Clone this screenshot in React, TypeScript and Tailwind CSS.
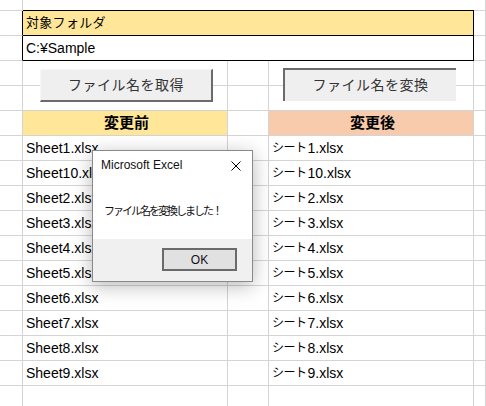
const GRID = "border-r border-b border-[#d4d4d4]";

function Cell({ className = "", children }: { className?: string; children?: React.ReactNode }) {
  return (
    <div className={`h-[25px] flex items-center pl-[3px] overflow-hidden whitespace-nowrap ${className}`}>
      {children}
    </div>
  );
}

const files = ["1", "10", "2", "3", "4", "5", "6", "7", "8", "9"];

export default function App() {
  return (
    <div className="relative w-[486px] h-[406px] overflow-hidden bg-white text-[14px] text-black font-['Liberation_Sans','Noto_Sans_CJK_JP',sans-serif]">
      <div className="grid grid-cols-[23px_205px_41px_205px_1fr]">
        {/* row 1 (cut off) */}
        <div className={`h-[11px] ${GRID}`} />
        <div className="h-[11px] col-span-3 border-b border-black" />
        <div className={`h-[11px] ${GRID}`} />

        {/* folder label */}
        <Cell className="border-r border-b border-r-black border-b-[#d4d4d4]" />
        <Cell className="col-span-3 bg-[#ffe699] border-r border-b border-black">
          <span className="text-[13px] tracking-[0.3px]">対象フォルダ</span>
        </Cell>
        <Cell className={GRID} />

        {/* folder path */}
        <Cell className="border-r border-b border-r-black border-b-[#d4d4d4]" />
        <Cell className="col-span-3 border-r border-b border-black">C:¥Sample</Cell>
        <Cell className={GRID} />

        {/* button rows */}
        {[0, 1].map((r) => (
          <div key={r} className="contents">
            <Cell className={GRID} />
            <Cell className={GRID} />
            <Cell className={GRID} />
            <Cell className={GRID} />
            <Cell className={GRID} />
          </div>
        ))}

        {/* headers */}
        <Cell className={GRID} />
        <Cell className={`${GRID} bg-[#ffe699] justify-center pl-0 font-bold text-[15px]`}>変更前</Cell>
        <Cell className={GRID} />
        <Cell className={`${GRID} bg-[#f8cbad] justify-center pl-0 font-bold text-[15px]`}>変更後</Cell>
        <Cell className={GRID} />

        {files.map((n) => (
          <div key={n} className="contents">
            <Cell className={GRID} />
            <Cell className={GRID}>Sheet{n}.xlsx</Cell>
            <Cell className={GRID} />
            <Cell className={GRID}>
              <span className="text-[12px] tracking-[-0.5px] mr-[1px]">シート</span>
              {n}.xlsx
            </Cell>
            <Cell className={GRID} />
          </div>
        ))}

        {/* trailing empty row */}
        <Cell className={GRID} />
        <Cell className={GRID} />
        <Cell className={GRID} />
        <Cell className={GRID} />
        <Cell className={GRID} />
      </div>

      {/* form buttons over the sheet */}
      <button className="absolute left-[40px] top-[69px] w-[173px] h-[33px] bg-[#efefef] border-t border-l border-t-[#f7f7f7] border-l-[#f7f7f7] border-b-2 border-r-2 border-b-[#6b6b6b] border-r-[#6b6b6b] text-[#333] tracking-[0.5px] flex items-center justify-center">
        ファイル名を取得
      </button>
      <button className="absolute left-[283px] top-[68px] w-[173px] h-[33px] bg-[#efefef] border-t-2 border-l-2 border-t-[#6b6b6b] border-l-[#6b6b6b] text-[#333] tracking-[0.5px] flex items-center justify-center">
        ファイル名を変換
      </button>

      {/* message box */}
      <div className="absolute left-[92px] top-[150px] w-[161px] h-[132px] bg-white border border-[#8a8a8a] shadow-[0_4px_18px_rgba(0,0,0,0.28)] flex flex-col">
        <div className="h-[28px] flex items-center justify-between pl-[8px] pr-[11px] text-[12px] text-[#111]">
          <span>Microsoft Excel</span>
          <svg width="10" height="10" viewBox="0 0 10 10" className="mt-[2px]">
            <path d="M0.5 0.5 L9.5 9.5 M9.5 0.5 L0.5 9.5" stroke="#000" strokeWidth="1" fill="none" />
          </svg>
        </div>
        <div className="flex-1 flex items-center pl-[11px] pt-[4px]">
          <span className="text-[11px] tracking-[-2px] text-[#111]">ファイル名を変換しました！</span>
        </div>
        <div className="h-[42px] bg-[#f0f0f0] flex items-start justify-end pr-[15px] pt-[9px]">
          <button className="w-[75px] h-[23px] bg-[#e1e1e1] border-2 border-[#6a6a6a] text-[12px] text-[#111] flex items-center justify-center">
            OK
          </button>
        </div>
      </div>
    </div>
  );
}
